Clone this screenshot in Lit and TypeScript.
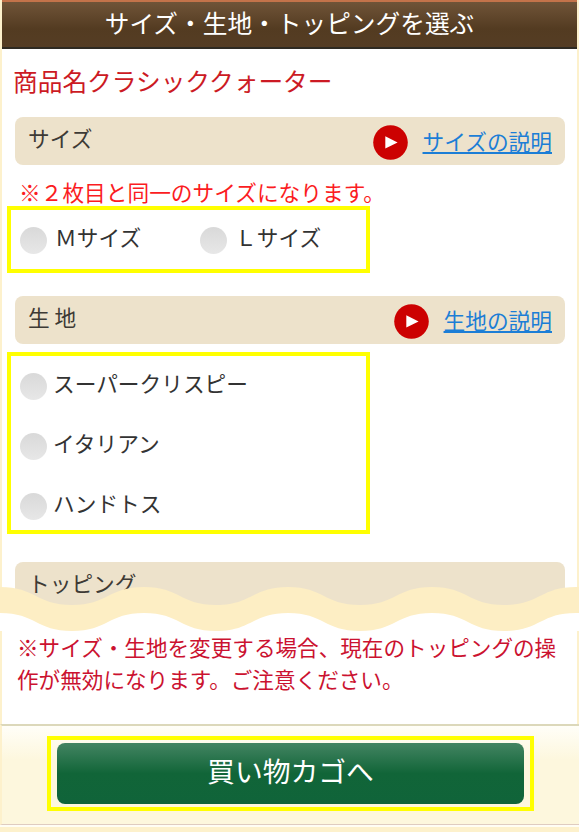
import { LitElement, html, css, svg } from "lit";
import { customElement } from "lit/decorators.js";

const play = html`<svg class="play" viewBox="0 0 35 35" aria-hidden="true">
  <circle cx="17.5" cy="17.5" r="17.3" fill="#cc0101"></circle>
  <path d="M12.3 11.2 L24.6 17.4 L12.3 23.6 Z" fill="#fff"></path>
</svg>`;

function wavePath(): string {
  let top = "M0 0";
  for (let x = 0; x < 576; x += 144) {
    top += ` C${x + 36} 0 ${x + 36} 18 ${x + 72} 18 C${x + 108} 18 ${x + 108} 0 ${x + 144} 0`;
  }
  return top;
}

@customElement("app-root")
export class AppRoot extends LitElement {
  static styles = css`
    :host {
      display: block;
      position: relative;
      width: 579px;
      height: 832px;
      overflow: hidden;
      background: #fff;
      font-family: "Noto Sans CJK JP", "Noto Sans", sans-serif;
      font-size: 21.7px;
      color: #333;
    }
    .page {
      height: 832px;
      box-sizing: border-box;
      border-left: 2px solid #fdf1cc;
      border-right: 2px solid #fdf1cc;
      padding-right: 12px;
      padding-left: 5px;
    }
    header {
      height: 49px;
      box-sizing: border-box;
      margin: 0 -12px 0 -5px;
      border-top: 2px solid #c4734a;
      border-bottom: 2px solid #2e2a22;
      background: linear-gradient(#705438, #533b21 60%, #553d24);
      color: #fff;
      font-size: 24.7px;
      line-height: 41px;
      text-align: center;
    }
    .title {
      margin: 14px 0 0 6px;
      font-size: 24.7px;
      line-height: 34px;
      color: #cc1a24;
    }
    .bar {
      display: flex;
      align-items: center;
      justify-content: space-between;
      height: 48px;
      box-sizing: border-box;
      margin-left: 8px;
      padding: 0 13px 0 13px;
      border-radius: 8px;
      background: #ede2cb;
    }
    .bar.first { margin-top: 20px; }
    .bar.second { margin-top: 23px; }
    .bar.third { margin-top: 28px; }
    .bar-label {
      padding-bottom: 6px;
      line-height: 30px;
      color: #3d3a35;
    }
    .help {
      display: flex;
      align-items: center;
      gap: 15px;
      padding-top: 3px;
    }
    .play { width: 35px; height: 35px; display: block; filter: blur(0.3px); }
    a {
      color: #1c7ed6;
      text-decoration: underline;
      text-underline-offset: 2px;
      line-height: 30px;
      padding-bottom: 3px;
    }
    .note {
      margin: 13px 0 0 12px;
      line-height: 28px;
      color: #fb1c22;
    }
    .box {
      box-sizing: border-box;
      width: 363px;
      border: 4px solid #ffff00;
    }
    .box.sizes {
      display: flex;
      height: 67px;
      padding: 17px 0 0 9px;
    }
    .box.doughs {
      display: flex;
      flex-direction: column;
      gap: 33px;
      height: 182px;
      margin-top: 8px;
      padding: 17px 0 0 9px;
    }
    .opt {
      display: flex;
      align-items: center;
      height: 27px;
      gap: 6px;
      color: #333;
      line-height: 27px;
    }
    .opt-text { padding-bottom: 8px; }
    .sizes .opt { flex: none; width: 180px; gap: 8px; }
    .radio {
      width: 27px;
      height: 27px;
      flex: none;
      border-radius: 50%;
      background: linear-gradient(#d9d9d9, #e7e7e7);
    }
    .sheet {
      position: absolute;
      left: 0;
      right: 0;
      top: 587px;
      bottom: 0;
      display: flex;
      flex-direction: column;
    }
    .wave { display: block; width: 579px; height: 44px; flex: none; }
    .warn-wrap {
      flex: none;
      height: 93px;
      box-sizing: border-box;
      border-left: 2px solid #fdf1cc;
      border-right: 2px solid #fdf1cc;
      background: #fff;
      padding: 0 14px 0 15px;
      font-size: 21.6px;
      line-height: 32px;
      color: #cb1230;
    }
    .warn-wrap p { margin: 0; }
    .foot {
      flex: none;
      height: 101px;
      box-sizing: border-box;
      display: flex;
      justify-content: center;
      padding-top: 10px;
      border-top: 2px solid #dcd8ba;
      border-bottom: 1px solid #dfccc0;
      border-left: 2px solid #fdf1cc;
      background: linear-gradient(#fffef8, #fdf7dd 35%, #fdf7dd);
    }
    .cart-frame {
      box-sizing: border-box;
      width: 487px;
      height: 75px;
      padding: 3px 6px;
      border: 4px solid #ffff00;
    }
    .cart {
      display: flex;
      align-items: center;
      justify-content: center;
      width: 100%;
      height: 61px;
      padding: 0 0 7px;
      border: 0;
      border-radius: 8px;
      background: linear-gradient(#438462, #116538 50%, #10643a);
      color: #fff;
      font-family: inherit;
      font-size: 27.8px;
    }
    .tail {
      flex: 1;
      background: #fdf1cc;
      border-top: 2px solid #fffdf4;
    }
  `;

  render() {
    return html`
      <div class="page">
        <header>サイズ・生地・トッピングを選ぶ</header>
        <div class="title">商品名クラシッククォーター</div>

        <div class="bar first">
          <span class="bar-label">サイズ</span>
          <span class="help">${play}<a href="#">サイズの説明</a></span>
        </div>
        <div class="note">※２枚目と同一のサイズになります。</div>
        <div class="box sizes">
          <label class="opt"><span class="radio"></span><span class="opt-text">Ｍサイズ</span></label>
          <label class="opt"><span class="radio"></span><span class="opt-text">Ｌサイズ</span></label>
        </div>

        <div class="bar second">
          <span class="bar-label">生 地</span>
          <span class="help">${play}<a href="#">生地の説明</a></span>
        </div>
        <div class="box doughs">
          <label class="opt"><span class="radio"></span><span class="opt-text">スーパークリスピー</span></label>
          <label class="opt"><span class="radio"></span><span class="opt-text">イタリアン</span></label>
          <label class="opt"><span class="radio"></span><span class="opt-text">ハンドトス</span></label>
        </div>

        <div class="bar third">
          <span class="bar-label">トッピング</span>
        </div>
      </div>

      <div class="sheet">
        <svg class="wave" viewBox="0 0 579 44" preserveAspectRatio="none" aria-hidden="true">
          ${svg`<rect y="18" width="579" height="26" fill="#fff"></rect>
          <path d="${wavePath()} L579 0 L579 26 L576 26 ${this.back()} Z" fill="#fdeec4"></path>`}
        </svg>
        <div class="warn-wrap">
          <p>※サイズ・生地を変更する場合、現在のトッピングの操作が無効になります。ご注意ください。</p>
        </div>
        <div class="foot">
          <div class="cart-frame"><button class="cart">買い物カゴへ</button></div>
        </div>
        <div class="tail"></div>
      </div>
    `;
  }

  back(): string {
    let d = "";
    for (let x = 576; x > 0; x -= 144) {
      d += ` C${x - 36} 26 ${x - 36} 44 ${x - 72} 44 C${x - 108} 44 ${x - 108} 26 ${x - 144} 26`;
    }
    return d;
  }
}
